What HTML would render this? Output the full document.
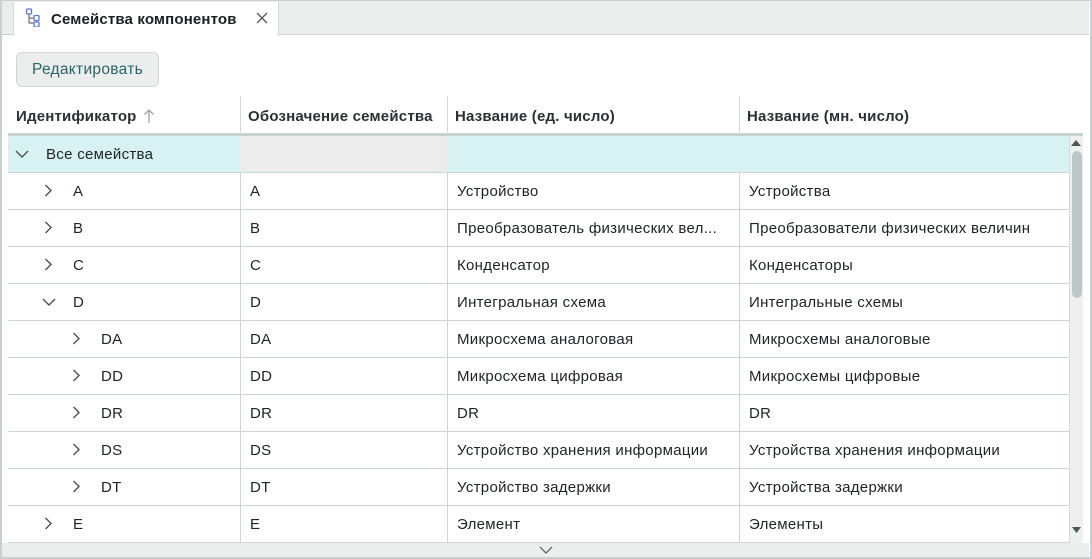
<!DOCTYPE html>
<html><head><meta charset="utf-8">
<style>
*{box-sizing:border-box;margin:0;padding:0}
html,body{width:1092px;height:559px;overflow:hidden}
body{background:#fff;font-family:"Liberation Sans","DejaVu Sans",sans-serif;font-size:15px;letter-spacing:0.3px;color:#1d2326;position:relative}
.a{position:absolute}
.row{position:absolute;left:8px;width:1061px;height:37px;border-bottom:1px solid #cdd6d6}
.c{position:absolute;top:1px;height:37px;line-height:36px;white-space:nowrap}
.vl{position:absolute;top:0;width:1px;height:37px;background:#cdd6d6}
.chev{position:absolute;top:11px}
.hd{position:absolute;top:108px;font-weight:bold;color:#2b3033;font-size:15px;letter-spacing:0.2px}
</style></head><body>
<div class="a" style="left:0;top:0;width:1092px;height:559px;border:2px solid #c8d0d0;border-top:1px solid #c8d0d0"></div>
<div class="a" style="left:2px;top:1px;width:1087px;height:34px;background:#ebedec;border-bottom:1px solid #cdd4d4"></div>
<div class="a" style="left:13px;top:2px;width:266px;height:34px;background:#fff;border-left:1px solid #d3d9d9;border-right:1px solid #d3d9d9"></div>
<svg class="a" style="left:24px;top:7px" width="18" height="20" viewBox="0 0 18 20">
<path d="M5 6v10h5M5 11h5" stroke="#6b7272" stroke-width="1.2" fill="none"/>
<rect x="2.5" y="2" width="5" height="5" rx="1" fill="#fff" stroke="#5b78d9" stroke-width="1.3"/>
<rect x="10" y="8.5" width="5" height="5" rx="1" fill="#fff" stroke="#5b78d9" stroke-width="1.3"/>
<rect x="10" y="15" width="5" height="5" rx="1" fill="#fff" stroke="#5b78d9" stroke-width="1.3"/>
</svg>
<div class="a" style="left:51px;top:11px;font-weight:bold;font-size:15px;letter-spacing:0.15px;color:#1a1f22">Семейства компонентов</div>
<svg class="a" style="left:256px;top:12px" width="12" height="12"><path d="M1 1L11 11M11 1L1 11" stroke="#555" stroke-width="1.3"/></svg>
<div class="a" style="left:16px;top:52px;width:143px;height:35px;background:#ebeeed;border:1px solid #d0d7d6;border-radius:6px;color:#2a6466;line-height:34px;text-align:center;font-size:15.5px;letter-spacing:0.3px">Редактировать</div>
<div class="a" style="left:8px;top:96px;width:1075px;height:40px;border-bottom:3px solid #c8d1d1"></div>
<div class="a" style="left:240px;top:96px;width:1px;height:38px;background:#d3dada"></div>
<div class="a" style="left:447px;top:96px;width:1px;height:38px;background:#d3dada"></div>
<div class="a" style="left:739px;top:96px;width:1px;height:38px;background:#d3dada"></div>
<div class="hd" style="left:16px">Идентификатор</div>
<svg class="a" style="left:143px;top:108px" width="12" height="16"><path d="M6 15V2M1.5 6.5L6 2l4.5 4.5" stroke="#9aa3a3" stroke-width="1.3" fill="none"/></svg>
<div class="hd" style="left:248px">Обозначение семейства</div>
<div class="hd" style="left:455px">Название (ед. число)</div>
<div class="hd" style="left:747px">Название (мн. число)</div>
<div class="row" style="top:136px;background:#d8f1f2">
<div class="a" style="left:232px;top:0;width:207px;height:36px;background:#ececec"></div>
<svg class="chev" style="left:7px;top:14px" width="14" height="9"><path d="M1 1l6 6 6-6" stroke="#4a5152" stroke-width="1.4" fill="none"/></svg>
<div class="c" style="left:38px">Все семейства</div>
</div>
<div id="rows"></div>
<div class="a" style="left:1069px;top:136px;width:14px;height:407px;background:#edf0ef;border-left:1px solid #d3dada"></div>
<svg class="a" style="left:1071px;top:139px" width="10" height="8"><path d="M0 7L5 1l5 6z" fill="#4c5656"/></svg>
<div class="a" style="left:1072px;top:151px;width:10px;height:147px;background:#bcc8c8;border-radius:5px"></div>
<svg class="a" style="left:1072px;top:527px" width="9" height="7"><path d="M0 0h9L4.5 6z" fill="#4c5656"/></svg>
<div class="a" style="left:2px;top:543px;width:1087px;height:14px;background:#eceeed"></div>
<svg class="a" style="left:539px;top:546px" width="14" height="9"><path d="M1 1l6 6 6-6" stroke="#555" stroke-width="1.2" fill="none"/></svg>
<script>
var d=[[0,"A","A","Устройство","Устройства"],[0,"B","B","Преобразователь физических вел...","Преобразователи физических величин"],[0,"C","C","Конденсатор","Конденсаторы"],[2,"D","D","Интегральная схема","Интегральные схемы"],[1,"DA","DA","Микросхема аналоговая","Микросхемы аналоговые"],[1,"DD","DD","Микросхема цифровая","Микросхемы цифровые"],[1,"DR","DR","DR","DR"],[1,"DS","DS","Устройство хранения информации","Устройства хранения информации"],[1,"DT","DT","Устройство задержки","Устройства задержки"],[0,"E","E","Элемент","Элементы"]];
var h="";
d.forEach(function(r,i){
var top=173+i*37,lvl=r[0]==1?1:0,cx=lvl?64:36,tx=lvl?93:65;
h+='<div class="row" style="top:'+top+'px">';
h+='<div class="vl" style="left:232px"></div><div class="vl" style="left:439px"></div><div class="vl" style="left:731px"></div>';
if(r[0]==2)h+='<svg class="chev" style="left:34px;top:14px" width="14" height="9"><path d="M1 1l6 6 6-6" stroke="#4a5152" stroke-width="1.4" fill="none"/></svg>';
else h+='<svg class="chev" style="left:'+cx+'px" width="9" height="14"><path d="M1.5 1l5.5 5.5-5.5 5.5" stroke="#4a5152" stroke-width="1.4" fill="none"/></svg>';
h+='<div class="c" style="left:'+tx+'px">'+r[1]+'</div><div class="c" style="left:242px">'+r[2]+'</div><div class="c" style="left:449px">'+r[3]+'</div><div class="c" style="left:741px">'+r[4]+'</div></div>';
});
document.getElementById("rows").innerHTML=h;
</script>
</body></html>
